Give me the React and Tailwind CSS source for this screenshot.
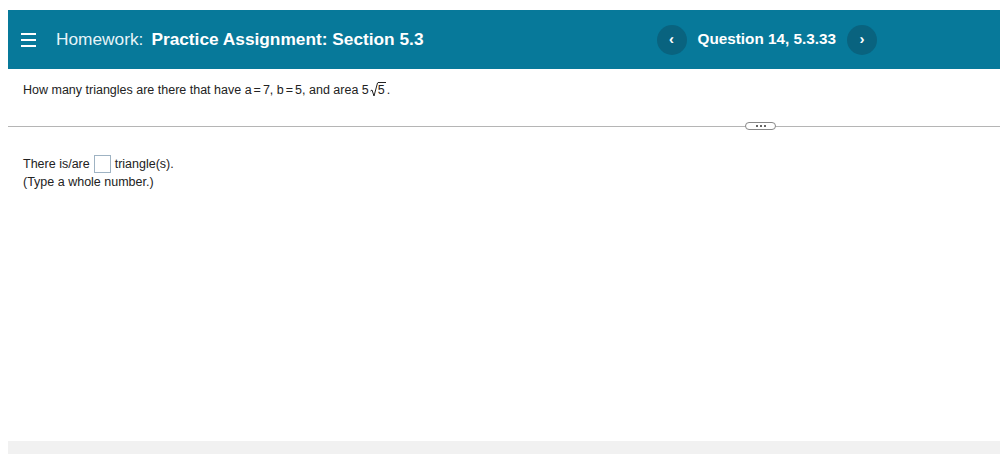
import React from 'react';

export default function App() {
    return (
        <div className="h-[454px] w-[1000px] bg-white pl-2 pt-[10px] flex flex-col font-['Liberation_Sans',Arial,sans-serif]">
            {/* header bar */}
            <div className="h-[59px] bg-[#07799a] flex items-center text-white shrink-0">
                <div className="ml-[13px] w-[15px] flex flex-col gap-[4px]">
                    <span className="block h-[2px] bg-white"></span>
                    <span className="block h-[2px] bg-white"></span>
                    <span className="block h-[2px] bg-white"></span>
                </div>
                <span className="ml-5 text-[17.3px] text-[#e6f4f8]">Homework:</span>
                <span className="ml-[8px] text-[17.3px] font-bold">Practice Assignment: Section 5.3</span>
                <div className="ml-[233px] flex items-center">
                    <button className="h-[30px] w-[30px] rounded-full bg-[#09637f] flex items-center justify-center text-white text-[15px] font-bold leading-none pb-[2px]">‹</button>
                    <span className="ml-[11px] text-[15.3px] font-bold">Question 14, 5.3.33</span>
                    <button className="ml-[11px] h-[30px] w-[30px] rounded-full bg-[#09637f] flex items-center justify-center text-white text-[15px] font-bold leading-none pb-[2px]">›</button>
                </div>
            </div>

            {/* question */}
            <div className="pl-[15px] pt-[13px] text-[12.5px] leading-[16px] text-[#222]">
                How many triangles are there that have a<span className="mx-[2px]">=</span>7, b<span className="mx-[2px]">=</span>5, and area 5
                <span className="inline-block align-[-3px] ml-[1px]">
                    <span className="flex items-end">
                        <svg width="8" height="15" viewBox="0 0 8 15">
                            <path d="M0.5 9 L2 8 L4 14 L7.5 1 L8 1" fill="none" stroke="#222" strokeWidth="1" />
                        </svg>
                        <span className="border-t border-[#222] leading-[14px] pr-[1px]">5</span>
                    </span>
                </span>
                <span className="ml-[1px]">.</span>
            </div>

            {/* divider */}
            <div className="mt-[23px] relative h-[10px] flex items-center">
                <div className="w-full h-[1px] bg-[#b5b5b5]"></div>
                <div className="absolute left-[737px] top-[1px] h-[8px] w-[31px] rounded-full border border-[#888] bg-white flex items-center justify-center gap-[2px]">
                    <span className="block h-[2px] w-[2px] bg-[#666]"></span>
                    <span className="block h-[2px] w-[2px] bg-[#666]"></span>
                    <span className="block h-[2px] w-[2px] bg-[#666]"></span>
                </div>
            </div>

            {/* answer */}
            <div className="pl-[15px] pt-[24px] text-[12.5px] text-[#222]">
                <div className="flex items-center h-[18px]">
                    <span>There is/are</span>
                    <span className="mx-[4px] inline-block h-[18px] w-[17px] border border-[#9fb3c3] bg-white"></span>
                    <span>triangle(s).</span>
                </div>
                <div className="leading-[18px]">(Type a whole number.)</div>
            </div>

            <div className="flex-1"></div>
            {/* footer strip */}
            <div className="h-[13px] bg-[#f1f1f1] shrink-0"></div>
        </div>
    );
}
